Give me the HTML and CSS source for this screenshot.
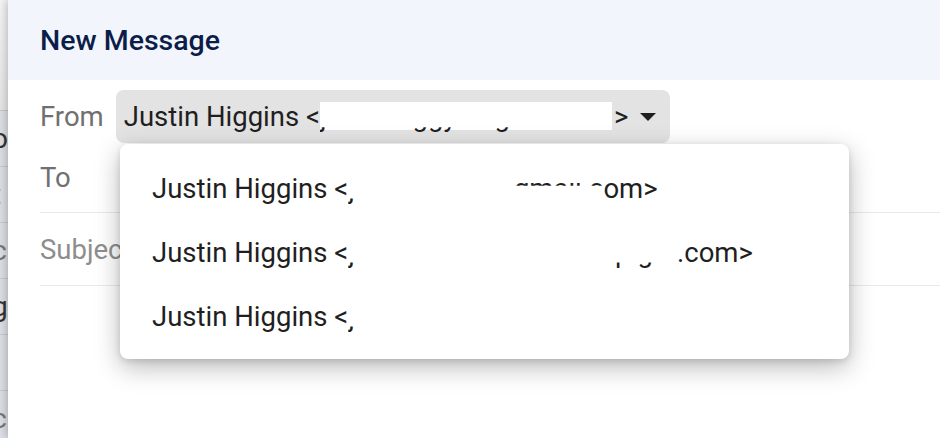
FILE: index.html
```html
<!DOCTYPE html>
<html>
<head>
<meta charset="utf-8">
<link rel="stylesheet" href="styles.css">
</head>
<body>
<div class="page">
  <div class="inbox">
    <div class="inbox-top"></div>
    <div class="inbox-row dark">o</div>
    <div class="inbox-row light">t</div>
    <div class="inbox-row light">c</div>
    <div class="inbox-row dark">g</div>
    <div class="inbox-row dark">l</div>
    <div class="inbox-row light">c</div>
  </div>
  <div class="compose">
    <div class="header">New Message</div>
    <div class="from-row">
      <span class="label from-label">From</span>
      <div class="select">
        <span>Justin Higgins &lt;</span><span class="masked"><span class="desc">j</span><span class="desc sd1">ggy</span><span class="desc sd2">g</span></span><span class="tail">&gt;</span>
        <svg class="caret" width="16" height="8" viewBox="0 0 16 8"><path d="M0 0H16L8 8Z" fill="#1f1f1f"/></svg>
      </div>
    </div>
    <div class="field-row"><span class="label">To</span></div>
    <div class="field-row"><span class="label placeholder">Subject</span></div>

    <div class="menu">
      <div class="item"><span>Justin Higgins &lt;</span><span class="desc">j</span><span class="gap g1"></span><span class="topband">gmail.c</span><span>om&gt;</span></div>
      <div class="item"><span>Justin Higgins &lt;</span><span class="desc">j</span><span class="gap g2"></span><span class="desc">p.g</span><span class="gap g3"></span><span>.com&gt;</span></div>
      <div class="item"><span>Justin Higgins &lt;</span><span class="desc">j</span></div>
    </div>
  </div>
</div>
</body>
</html>
```

FILE: styles.css
```css
html, body {
  margin: 0;
  padding: 0;
  background: #ffffff;
}
body {
  font-family: Roboto, "Liberation Sans", Arial, sans-serif;
  overflow: hidden;
}
.page {
  display: flex;
  width: 940px;
  height: 438px;
}
.inbox {
  width: 8px;
  flex: none;
  background: #dcdfe3;
  overflow: hidden;
}
.inbox-top {
  height: 110px;
  background: linear-gradient(#f4f4f4, #e6e6e6);
}
.inbox-row {
  height: 55px;
  border-top: 1px solid #c6c9ce;
  font-size: 28px;
  line-height: 55px;
  white-space: nowrap;
  text-indent: -8px;
  color: #333;
}
.inbox-row.light {
  color: #777;
}
.compose {
  position: relative;
  flex: 1;
  background: #ffffff;
  box-shadow: -2px 0 8px rgba(0, 0, 0, 0.22);
}
.header {
  height: 80px;
  background: #f2f6fc;
  display: flex;
  align-items: center;
  padding-left: 32px;
  font-size: 28.5px;
  font-weight: 500;
  color: #0b1d48;
}
.from-row {
  display: flex;
  align-items: center;
  padding: 10px 0 0 32px;
  height: 53px;
}
.label {
  font-size: 27.5px;
  color: #707070;
}
.from-label {
  margin-right: 12px;
}
.select {
  display: flex;
  align-items: center;
  height: 53px;
  box-sizing: border-box;
  background: #e3e3e3;
  border-radius: 8px;
  padding: 0 14px 0 8px;
  font-size: 27.5px;
  color: #1f1f1f;
}
.masked {
  display: inline-block;
  width: 292px;
  height: 1.172em;
  white-space: nowrap;
  background: linear-gradient(#ffffff, #ffffff) no-repeat 0 2px / 100% 28px;
}
.sd1 {
  margin-left: 86px;
}
.sd2 {
  margin-left: 38px;
}
.tail {
  margin-left: 2px;
}
.caret {
  margin-left: 12px;
}
.desc {
  display: inline-block;
  clip-path: inset(0.98em 0 0 0);
}
.topband {
  display: inline-block;
  clip-path: inset(0.42em 0 0.68em 0);
}
.field-row {
  margin-left: 32px;
  height: 69px;
  display: flex;
  align-items: center;
  border-bottom: 1px solid #e7e9ec;
}
.field-row + .field-row {
  height: 72px;
}
.placeholder {
  color: #8e8e8e;
}
.menu {
  position: absolute;
  left: 112px;
  top: 144px;
  width: 729px;
  padding: 12px 0 11px;
  background: #ffffff;
  border-radius: 8px;
  box-shadow: 0 8px 26px rgba(0, 0, 0, 0.28), 0 2px 6px rgba(0, 0, 0, 0.12);
}
.item {
  height: 64px;
  display: flex;
  align-items: center;
  padding-left: 32px;
  font-size: 27.5px;
  color: #1f1f1f;
  white-space: nowrap;
}
.gap {
  display: inline-block;
}
.g1 {
  width: 159px;
}
.g2 {
  width: 260px;
}
.g3 {
  width: 24px;
}
```
